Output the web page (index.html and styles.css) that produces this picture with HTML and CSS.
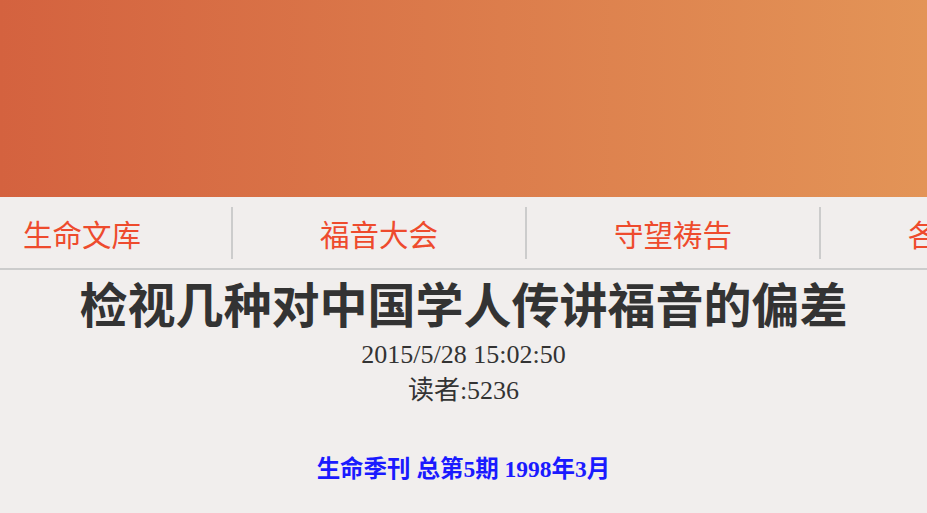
FILE: index.html
```html
<!DOCTYPE html>
<html lang="zh">
<head>
<meta charset="utf-8">
<title>检视几种对中国学人传讲福音的偏差</title>
<link rel="stylesheet" href="styles.css">
</head>
<body>
<header class="banner"></header>
<nav class="nav">
  <div class="nav-row">
    <a class="nav-item">生命文库</a>
    <a class="nav-item">福音大会</a>
    <a class="nav-item">守望祷告</a>
    <a class="nav-item">各地教会</a>
  </div>
</nav>
<main class="article">
  <h1 class="title">检视几种对中国学人传讲福音的偏差</h1>
  <div class="meta">2015/5/28 15:02:50</div>
  <div class="meta">读者:5236</div>
  <p class="source">生命季刊 总第5期 1998年3月</p>
</main>
</body>
</html>
```
FILE: styles.css
```css
html, body {
  margin: 0;
  padding: 0;
  background: #f1eeed;
  font-family: "Liberation Serif", "Noto Sans CJK SC", serif;
  overflow: hidden;
}
.banner {
  height: 197px;
  background: linear-gradient(to right, #d4623f, #e39457);
}
.nav {
  height: 71px;
  border-bottom: 2px solid #cccccc;
  overflow: hidden;
}
.nav-row {
  display: flex;
  margin-left: -63px;
  padding-top: 10px;
}
.nav-item {
  flex: 0 0 294px;
  height: 52px;
  display: flex;
  align-items: center;
  justify-content: center;
  font-size: 29.5px;
  color: #ee4b2d;
  border-left: 2px solid #cccccc;
  box-sizing: border-box;
}
.nav-item:first-child {
  border-left: none;
  padding-right: 4px;
}
.article {
  text-align: center;
  color: #333333;
}
.title {
  margin: 7px 0 0;
  font-size: 48px;
  line-height: 60px;
  font-weight: bold;
  color: #333333;
  white-space: nowrap;
}
.meta {
  font-size: 26px;
  line-height: 36px;
}
.source {
  margin: 45px 0 0;
  font-size: 23.5px;
  line-height: 30px;
  font-weight: bold;
  color: #1a1aff;
}
```
